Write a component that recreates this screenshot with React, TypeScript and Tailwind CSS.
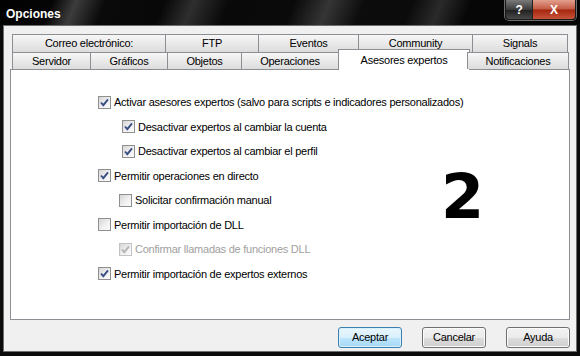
import { useState } from 'react';

interface CheckRowProps {
  label: string;
  checked: boolean;
  disabled?: boolean;
  indent?: string;
}

function CheckBox({ checked, disabled }: { checked: boolean; disabled?: boolean }) {
  return (
    <span
      className={`flex h-[13px] w-[13px] shrink-0 items-center justify-center border ${
        disabled ? 'border-[#c2c2c2]' : 'border-[#8e8f8f]'
      } bg-[linear-gradient(135deg,#d6d6d6,#f2f2f2_60%,#fbfbfb)]`}
    >
      {checked && (
        <svg width="11" height="11" viewBox="0 0 11 11">
          <path
            d="M2 5.5 L4.3 8.2 L9 2.3"
            fill="none"
            stroke={disabled ? '#b4b4b4' : '#3a4f86'}
            strokeWidth="1.9"
          />
        </svg>
      )}
    </span>
  );
}

function CheckRow({ label, checked, disabled, indent = 'pl-0' }: CheckRowProps) {
  const [on, setOn] = useState(checked);
  return (
    <label className={`flex h-[24.5px] items-center gap-[3px] ${indent}`}>
      <span onClick={() => !disabled && setOn(!on)}>
        <CheckBox checked={on} disabled={disabled} />
      </span>
      <span className={disabled ? 'text-[#a0a0a0]' : 'text-black'}>{label}</span>
    </label>
  );
}

const topTabs = [
  { label: 'Correo electrónico:', w: 'w-[154px]' },
  { label: 'FTP', w: 'w-[94px]' },
  { label: 'Eventos', w: 'w-[101px]' },
  { label: 'Community', w: 'w-[115px]' },
  { label: 'Signals', w: 'w-[96px]' },
];

const bottomTabs = [
  { label: 'Servidor', w: 'w-[79px]' },
  { label: 'Gráficos', w: 'w-[78px]' },
  { label: 'Objetos', w: 'w-[75px]' },
  { label: 'Operaciones', w: 'w-[98px]' },
  { label: 'Asesores expertos', w: 'w-[132px]', active: true },
  { label: 'Notificaciones', w: 'w-[102px]' },
];

const tabBase =
  'flex items-center justify-center border border-b-0 border-[#8c8e94] -ml-px first:ml-0';

export default function App() {
  return (
    <div
      className="flex h-[356px] w-[580px] flex-col bg-[#0b0b0b] text-[11px] tracking-[-0.25px] text-black"
      style={{ fontFamily: '"Liberation Sans", Arial, sans-serif' }}
    >
      {/* title bar */}
      <div className="flex h-[25px] shrink-0 items-start justify-between bg-[linear-gradient(112deg,#020202_0%,#050505_9%,#3c3c3c_13%,#0a0a0a_18%,#080808_28%,#2e2e2e_33%,#090909_39%,#0a0a0a_50%,#353535_56%,#0c0c0c_62%,#0b0b0b_70%,#2a2a2a_75%,#070707_80%,#050505_100%)] pl-[6px] pr-[4px]">
        <span className="mt-[5px] text-[12px] font-bold tracking-normal text-white">Opciones</span>
        <div className="flex overflow-hidden rounded-b-[4px] border border-t-0 border-[#1a1a1a] shadow-[0_0_0_1px_#6e6e6e]">
          <div className="flex h-[19px] w-[27px] items-center justify-center border-r border-[#222] bg-[linear-gradient(#7a7a7a,#3c3c3c_50%,#1e1e1e_51%,#4a4a4a)] text-[12px] font-bold text-white">
            ?
          </div>
          <div className="flex h-[19px] w-[42px] items-center justify-center bg-[linear-gradient(#e2a08e,#c45a42_48%,#a5260f_52%,#c8533a)] text-[12px] font-bold text-white">
            X
          </div>
        </div>
      </div>

      {/* window body */}
      <div className="flex flex-1 px-[3px] pb-[4px]">
        <div className="flex flex-1 flex-col border border-[#6e6e6e] bg-[#f0f0f0] px-[6px] pt-[8px]">
          {/* tabs */}
          <div className="flex pl-[2px]">
            {topTabs.map((t) => (
              <div
                key={t.label}
                className={`${tabBase} ${t.w} h-[18px] bg-[linear-gradient(#f7f7f7,#e9e9e9_50%,#dcdcdc)]`}
              >
                {t.label}
              </div>
            ))}
          </div>
          <div className="relative z-10 flex h-[17px] items-end pl-[2px]">
            {bottomTabs.map((t) =>
              t.active ? (
                <div
                  key={t.label}
                  className={`${tabBase} ${t.w} mx-[-2px] mb-[-1px] h-[21px] items-start bg-white pt-[2px]`}
                >
                  {t.label}
                </div>
              ) : (
                <div
                  key={t.label}
                  className={`${tabBase} ${t.w} h-[17px] bg-[linear-gradient(#f7f7f7,#e9e9e9_50%,#dcdcdc)]`}
                >
                  {t.label}
                </div>
              )
            )}
          </div>

          {/* panel */}
          <div className="relative flex h-[251px] flex-col border border-[#8c8e94] bg-white pl-[87px] pt-[20px]">
            <CheckRow
              checked
              label="Activar asesores expertos (salvo para scripts e indicadores personalizados)"
            />
            <CheckRow checked indent="pl-[24px]" label="Desactivar expertos al cambiar la cuenta" />
            <CheckRow checked indent="pl-[24px]" label="Desactivar expertos al cambiar el perfil" />
            <CheckRow checked label="Permitir operaciones en directo" />
            <CheckRow checked={false} indent="pl-[21px]" label="Solicitar confirmación manual" />
            <CheckRow checked={false} label="Permitir importación de DLL" />
            <CheckRow checked disabled indent="pl-[21px]" label="Confirmar llamadas de funciones DLL" />
            <CheckRow checked label="Permitir importación de expertos externos" />

            <span
              className="absolute left-[430px] top-[96px] text-[62px] font-bold leading-none tracking-normal"
              style={{ fontFamily: '"DejaVu Sans", Verdana, sans-serif' }}
            >
              2
            </span>
          </div>

          {/* buttons */}
          <div className="flex justify-end gap-[20px] pt-[7px]">
            <button className="h-[21px] w-[64px] rounded-[3px] border border-[#3c7fb1] bg-[linear-gradient(#eaf6fd,#d9f0fc_50%,#bee6fd_51%,#a7d9f5)] shadow-[inset_0_0_0_1px_#d8f0fb]">
              Aceptar
            </button>
            <button className="h-[21px] w-[64px] rounded-[3px] border border-[#707070] bg-[linear-gradient(#f2f2f2,#ebebeb_50%,#dddddd_51%,#cfcfcf)] shadow-[inset_0_0_0_1px_#fbfbfb]">
              Cancelar
            </button>
            <button className="h-[21px] w-[64px] rounded-[3px] border border-[#707070] bg-[linear-gradient(#f2f2f2,#ebebeb_50%,#dddddd_51%,#cfcfcf)] shadow-[inset_0_0_0_1px_#fbfbfb]">
              Ayuda
            </button>
          </div>
        </div>
      </div>
    </div>
  );
}
